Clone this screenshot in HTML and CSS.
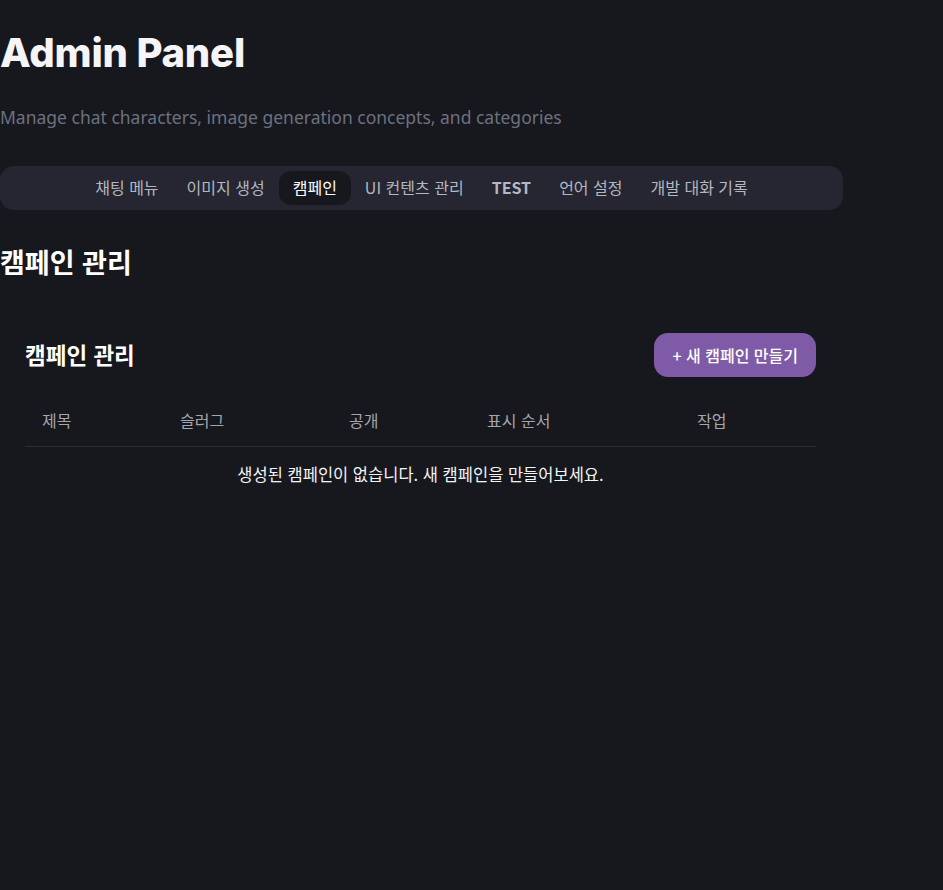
FILE: index.html
```html
<!DOCTYPE html>
<html lang="ko">
<head>
<meta charset="utf-8">
<title>Admin Panel</title>
<link rel="stylesheet" href="styles.css">
</head>
<body>
<main class="page">
  <h1 class="title">Admin Panel</h1>
  <p class="subtitle">Manage chat characters, image generation concepts, and categories</p>
  <nav class="tabs">
    <span class="tab">채팅 메뉴</span>
    <span class="tab">이미지 생성</span>
    <span class="tab active">캠페인</span>
    <span class="tab">UI 컨텐츠 관리</span>
    <span class="tab strong">TEST</span>
    <span class="tab">언어 설정</span>
    <span class="tab">개발 대화 기록</span>
  </nav>
  <h2 class="section-title">캠페인 관리</h2>
  <section class="card">
    <div class="card-head">
      <h3 class="card-title">캠페인 관리</h3>
      <button class="btn-new">+ 새 캠페인 만들기</button>
    </div>
    <table class="table">
      <colgroup>
        <col class="c1"><col class="c2"><col class="c3"><col class="c4"><col class="c5">
      </colgroup>
      <thead>
        <tr><th>제목</th><th>슬러그</th><th>공개</th><th>표시 순서</th><th>작업</th></tr>
      </thead>
      <tbody>
        <tr><td class="empty" colspan="5">생성된 캠페인이 없습니다. 새 캠페인을 만들어보세요.</td></tr>
      </tbody>
    </table>
  </section>
</main>
</body>
</html>
```
FILE: styles.css
```css
html, body {
  margin: 0;
  padding: 0;
  background: #17181d;
  min-height: 100%;
}
body {
  font-family: "Noto Sans", "Noto Sans CJK KR", sans-serif;
  color: #f3f4f6;
}
.page {
  width: 843px;
  padding-top: 29px;
}
.title {
  margin: 0;
  font-family: Inter, "Noto Sans", sans-serif;
  font-weight: 800;
  font-size: 40px;
  line-height: 48px;
  letter-spacing: -0.2px;
  color: #f5f5f7;
}
.subtitle {
  margin: 28px 0 0;
  font-size: 17.5px;
  line-height: 24px;
  color: #6b7180;
}
.tabs {
  margin-top: 37px;
  height: 44px;
  box-sizing: border-box;
  padding: 5px;
  background: #252631;
  border-radius: 14px;
  display: flex;
  justify-content: center;
  align-items: center;
}
.tab {
  font-family: "Noto Sans CJK KR", "Noto Sans", sans-serif;
  font-size: 16px;
  line-height: 32px;
  height: 34px;
  padding: 0 14px;
  color: #b4b7c0;
  border-radius: 12px;
}
.tab.strong {
  font-weight: 700;
}
.tab.active {
  background: #17181d;
  color: #ffffff;
}
.section-title {
  margin: 36px 0 0;
  font-family: "Noto Sans CJK KR", sans-serif;
  font-size: 27px;
  line-height: 32px;
  font-weight: 700;
  color: #ffffff;
}
.card {
  margin-top: 30px;
  padding: 25px 27px 25px 25px;
}
.card-head {
  display: flex;
  justify-content: space-between;
  align-items: center;
  height: 44px;
}
.card-title {
  margin: 0 0 3px;
  font-family: "Noto Sans CJK KR", sans-serif;
  font-size: 22.5px;
  line-height: 28px;
  font-weight: 700;
  color: #ffffff;
}
.btn-new {
  height: 44px;
  padding: 0 18px;
  border: 0;
  border-radius: 14px;
  background: #7f5aa6;
  color: #ffffff;
  font-family: "Noto Sans CJK KR", sans-serif;
  font-size: 16px;
  font-weight: 500;
}
.table {
  margin-top: 19px;
  width: 100%;
  border-collapse: collapse;
  font-family: "Noto Sans CJK KR", sans-serif;
  font-size: 16px;
}
.c1 { width: 138px; }
.c2 { width: 169px; }
.c3 { width: 138px; }
.c4 { width: 210px; }
.c5 { width: auto; }
.table th {
  text-align: left;
  font-weight: 400;
  color: #a3a6ae;
  padding: 12px 17px 14px;
  line-height: 24px;
  border-bottom: 1px solid #2a2b33;
}
.table td.empty {
  text-align: center;
  padding: 15px 0;
  line-height: 24px;
  font-size: 16.5px;
  color: #f3f4f6;
}
```
